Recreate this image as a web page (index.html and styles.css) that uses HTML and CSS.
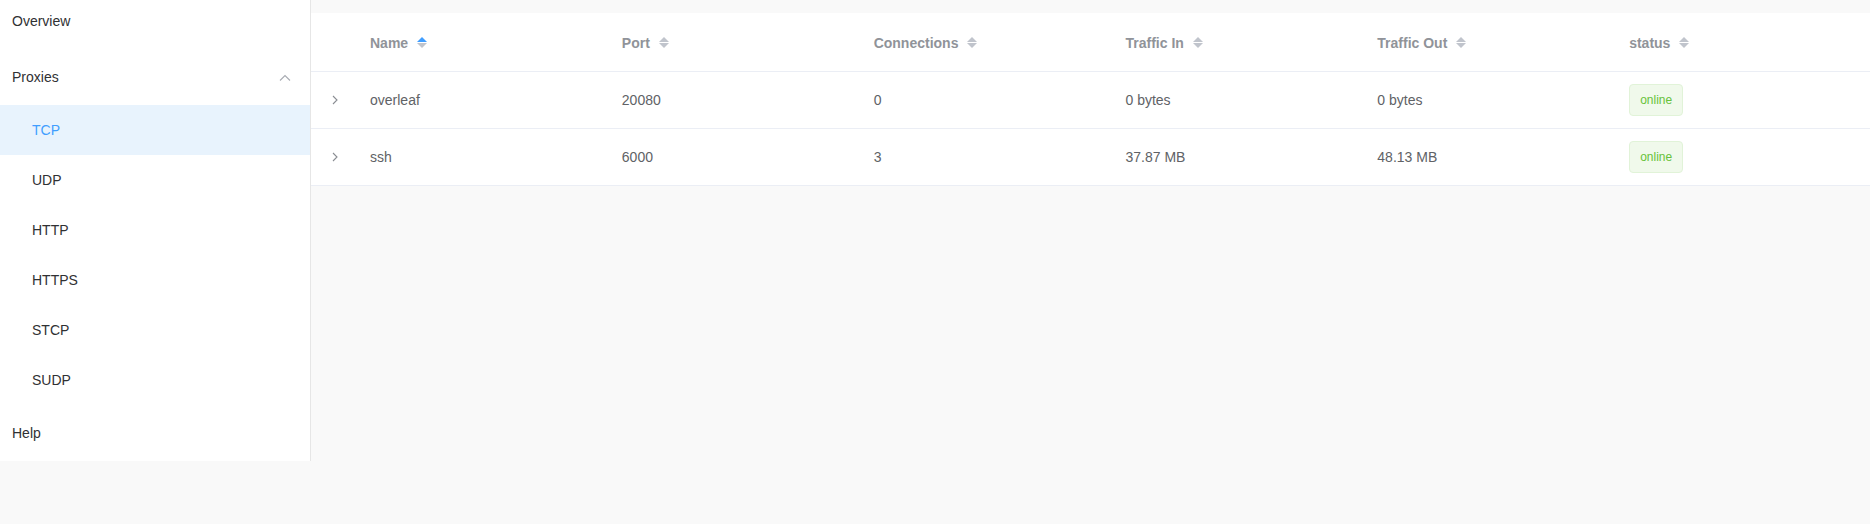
FILE: index.html
```html
<!DOCTYPE html>
<html>
<head>
<meta charset="utf-8">
<link rel="stylesheet" href="styles.css">
</head>
<body>
<div class="app">
  <aside class="sidebar">
    <div class="menu-item">Overview</div>
    <div class="menu-item submenu-title">Proxies
      <svg class="sub-arrow" width="12" height="8" viewBox="0 0 12 8"><polyline points="1,6.5 6,1.5 11,6.5" fill="none" stroke="#a8abb2" stroke-width="1.1"/></svg>
    </div>
    <div class="sub-item active">TCP</div>
    <div class="sub-item">UDP</div>
    <div class="sub-item">HTTP</div>
    <div class="sub-item">HTTPS</div>
    <div class="sub-item">STCP</div>
    <div class="sub-item">SUDP</div>
    <div class="menu-item">Help</div>
  </aside>
  <main class="main">
    <div class="table">
      <div class="row head">
        <div class="cell"></div>
        <div class="cell">Name <span class="caret asc"><i class="up"></i><i class="down"></i></span></div>
        <div class="cell">Port <span class="caret"><i class="up"></i><i class="down"></i></span></div>
        <div class="cell">Connections <span class="caret"><i class="up"></i><i class="down"></i></span></div>
        <div class="cell">Traffic In <span class="caret"><i class="up"></i><i class="down"></i></span></div>
        <div class="cell">Traffic Out <span class="caret"><i class="up"></i><i class="down"></i></span></div>
        <div class="cell">status <span class="caret"><i class="up"></i><i class="down"></i></span></div>
      </div>
      <div class="row">
        <div class="cell expand"><svg width="6" height="10" viewBox="0 0 6 10"><polyline points="1,1 5,5 1,9" fill="none" stroke="#8a8d93" stroke-width="1.1"/></svg></div>
        <div class="cell">overleaf</div>
        <div class="cell">20080</div>
        <div class="cell">0</div>
        <div class="cell">0 bytes</div>
        <div class="cell">0 bytes</div>
        <div class="cell"><span class="tag">online</span></div>
      </div>
      <div class="row">
        <div class="cell expand"><svg width="6" height="10" viewBox="0 0 6 10"><polyline points="1,1 5,5 1,9" fill="none" stroke="#8a8d93" stroke-width="1.1"/></svg></div>
        <div class="cell">ssh</div>
        <div class="cell">6000</div>
        <div class="cell">3</div>
        <div class="cell">37.87 MB</div>
        <div class="cell">48.13 MB</div>
        <div class="cell"><span class="tag">online</span></div>
      </div>
    </div>
  </main>
</div>
</body>
</html>
```
FILE: styles.css
```css
html, body {
  margin: 0;
  padding: 0;
  background: #f9f9f9;
  font-family: "Liberation Sans", Arial, sans-serif;
  font-size: 14px;
}
.app {
  display: flex;
  align-items: flex-start;
  margin-top: -7px;
}
.sidebar {
  width: 310px;
  flex: none;
  background: #fff;
  border-right: 1px solid #e6e6e6;
  color: #303133;
}
.menu-item {
  height: 56px;
  line-height: 56px;
  padding-left: 12px;
  position: relative;
}
.sub-arrow {
  position: absolute;
  right: 19px;
  top: 25px;
}
.sub-item {
  height: 50px;
  line-height: 50px;
  padding-left: 32px;
}
.sub-item.active {
  background: #e8f3fd;
  color: #409eff;
}
.main {
  flex: 1;
  padding-top: 20px;
}
.table {
  background: #fff;
}
.row {
  display: grid;
  grid-template-columns: 48px repeat(6, 1fr);
  height: 56px;
  align-items: center;
  border-bottom: 1px solid #ebeef5;
  color: #606266;
}
.row.head {
  height: 57px;
  padding-top: 1px;
  color: #909399;
  font-weight: bold;
}
.cell {
  padding-left: 11px;
  display: flex;
  align-items: center;
  white-space: pre;
}
.cell.expand {
  padding-left: 0;
  justify-content: center;
}
.caret {
  display: inline-flex;
  flex-direction: column;
  gap: 1px;
  margin-left: 5px;
}
.caret i {
  width: 0;
  height: 0;
  border-left: 5px solid transparent;
  border-right: 5px solid transparent;
}
.caret .up {
  border-bottom: 5px solid #c0c4cc;
}
.caret .down {
  border-top: 5px solid #c0c4cc;
}
.caret.asc .up {
  border-bottom-color: #409eff;
}
.tag {
  display: inline-block;
  height: 30px;
  line-height: 30px;
  padding: 0 10px;
  font-size: 12px;
  font-weight: normal;
  color: #67c23a;
  background: #f0f9eb;
  border: 1px solid #e1f3d8;
  border-radius: 4px;
}
```
